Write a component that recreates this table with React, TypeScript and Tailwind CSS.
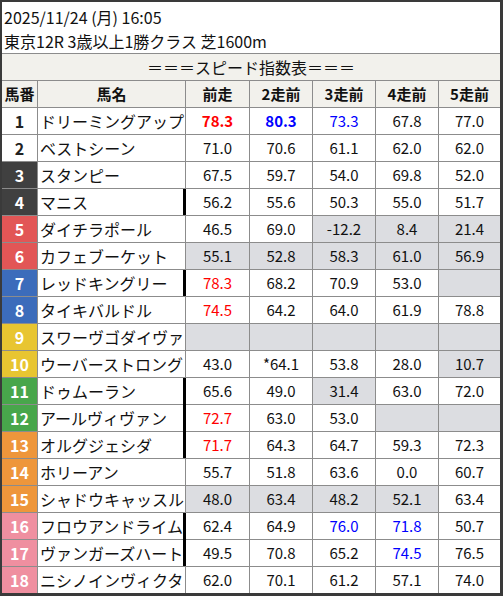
type Val = { v?: string; c?: "r" | "rb" | "bb" | "b"; g?: boolean };

const frameCls: Record<number, string> = {
  1: "bg-white text-[#222]",
  2: "bg-white text-[#222]",
  3: "bg-[#404040] text-white",
  4: "bg-[#404040] text-white",
  5: "bg-[#e25656] text-white",
  6: "bg-[#e25656] text-white",
  7: "bg-[#3c6cbb] text-white",
  8: "bg-[#3c6cbb] text-white",
  9: "bg-[#e8c531] text-white",
  10: "bg-[#e8c531] text-white",
  11: "bg-[#48a64b] text-white",
  12: "bg-[#48a64b] text-white",
  13: "bg-[#ee963b] text-white",
  14: "bg-[#ee963b] text-white",
  15: "bg-[#ee963b] text-white",
  16: "bg-[#ef8fa0] text-white",
  17: "bg-[#ef8fa0] text-white",
  18: "bg-[#ef8fa0] text-white",
};

const colorCls = {
  r: "text-[#ff0000]",
  rb: "text-[#ff0000] font-bold",
  b: "text-[#0000ff]",
  bb: "text-[#0000ff] font-bold",
};

const E: Val = { g: true };

const rows: { name: string; thick?: boolean; vals: Val[] }[] = [
  { name: "ドリーミングアップ", vals: [{ v: "78.3", c: "rb" }, { v: "80.3", c: "bb" }, { v: "73.3", c: "b" }, { v: "67.8" }, { v: "77.0" }] },
  { name: "ベストシーン", vals: [{ v: "71.0" }, { v: "70.6" }, { v: "61.1" }, { v: "62.0" }, { v: "62.0" }] },
  { name: "スタンピー", vals: [{ v: "67.5" }, { v: "59.7" }, { v: "54.0" }, { v: "69.8" }, { v: "52.0" }] },
  { name: "マニス", thick: true, vals: [{ v: "56.2" }, { v: "55.6" }, { v: "50.3" }, { v: "55.0" }, { v: "51.7" }] },
  { name: "ダイチラポール", vals: [{ v: "46.5" }, { v: "69.0" }, { v: "-12.2", g: true }, { v: "8.4", g: true }, { v: "21.4", g: true }] },
  { name: "カフェブーケット", vals: [{ v: "55.1", g: true }, { v: "52.8", g: true }, { v: "58.3", g: true }, { v: "61.0", g: true }, { v: "56.9", g: true }] },
  { name: "レッドキングリー", thick: true, vals: [{ v: "78.3", c: "r" }, { v: "68.2" }, { v: "70.9" }, { v: "53.0" }, E] },
  { name: "タイキバルドル", vals: [{ v: "74.5", c: "r" }, { v: "64.2" }, { v: "64.0" }, { v: "61.9" }, { v: "78.8" }] },
  { name: "スワーヴゴダイヴァ", vals: [E, E, E, E, E] },
  { name: "ウーバーストロング", vals: [{ v: "43.0" }, { v: "*64.1" }, { v: "53.8" }, { v: "28.0" }, { v: "10.7", g: true }] },
  { name: "ドゥムーラン", thick: true, vals: [{ v: "65.6" }, { v: "49.0" }, { v: "31.4", g: true }, { v: "63.0" }, { v: "72.0" }] },
  { name: "アールヴィヴァン", thick: true, vals: [{ v: "72.7", c: "r" }, { v: "63.0" }, { v: "53.0" }, E, E] },
  { name: "オルグジェシダ", thick: true, vals: [{ v: "71.7", c: "r" }, { v: "64.3" }, { v: "64.7" }, { v: "59.3" }, { v: "72.3" }] },
  { name: "ホリーアン", vals: [{ v: "55.7" }, { v: "51.8" }, { v: "63.6" }, { v: "0.0" }, { v: "60.7" }] },
  { name: "シャドウキャッスル", vals: [{ v: "48.0", g: true }, { v: "63.4", g: true }, { v: "48.2", g: true }, { v: "52.1", g: true }, { v: "63.4" }] },
  { name: "フロウアンドライム", thick: true, vals: [{ v: "62.4" }, { v: "64.9" }, { v: "76.0", c: "b" }, { v: "71.8", c: "b" }, { v: "50.7" }] },
  { name: "ヴァンガーズハート", thick: true, vals: [{ v: "49.5" }, { v: "70.8" }, { v: "65.2" }, { v: "74.5", c: "b" }, { v: "76.5" }] },
  { name: "ニシノインヴィクタ", vals: [{ v: "62.0" }, { v: "70.1" }, { v: "61.2" }, { v: "57.1" }, { v: "74.0" }] },
];

const cols = "grid grid-cols-[35px_147px_63px_62px_62px_62px_61px] gap-x-px h-[26px]";

export default function App() {
  return (
    <div className="w-[503px] h-[596px] border-t-2 border-l-2 border-r-[3px] border-b-[3px] border-[#3a3a3a] bg-white font-['Noto_Sans_CJK_JP','Noto_Sans',sans-serif] text-[#111] overflow-hidden">
      {/* title */}
      <div className="h-[52px] border-b border-[#8c8c8c] px-[2px] pt-[3px] text-[16px] leading-[24px]">
        <div>2025/11/24 (月) 16:05</div>
        <div>東京12R 3歳以上1勝クラス 芝1600m</div>
      </div>

      <div className="flex flex-col gap-y-px bg-[#8c8c8c]">
        <div className="h-[26px] bg-[#f2f1ec] flex items-center justify-center text-[16px]">
          ＝＝＝スピード指数表＝＝＝
        </div>

        <div className={cols + " text-[15px] font-bold"}>
          {["馬番", "馬名", "前走", "2走前", "3走前", "4走前", "5走前"].map((h) => (
            <div key={h} className="bg-[#f2f1ec] flex items-center justify-center">
              {h}
            </div>
          ))}
        </div>

        {rows.map((r, i) => {
          const n = i + 1;
          const nextThick = rows[i + 1]?.thick;
          return (
            <div key={n} className={cols}>
              <div className={"flex items-center justify-center text-[16px] font-bold " + frameCls[n]}>{n}</div>
              <div className="bg-white flex items-center pl-[2px] text-[16px] whitespace-nowrap overflow-hidden">
                {r.name}
              </div>
              {r.vals.map((c, j) => (
                <div
                  key={j}
                  className={
                    "relative flex items-center justify-center text-[15px] " +
                    (c.g ? "bg-[#dcdde1] " : "bg-white ") +
                    (c.c ? colorCls[c.c] : "")
                  }
                >
                  {j === 0 && r.thick && (
                    <span
                      className={
                        "absolute left-[-3px] top-0 w-[3px] bg-black " + (nextThick ? "bottom-[-1px]" : "bottom-0")
                      }
                    />
                  )}
                  {c.v}
                </div>
              ))}
            </div>
          );
        })}
      </div>
    </div>
  );
}
